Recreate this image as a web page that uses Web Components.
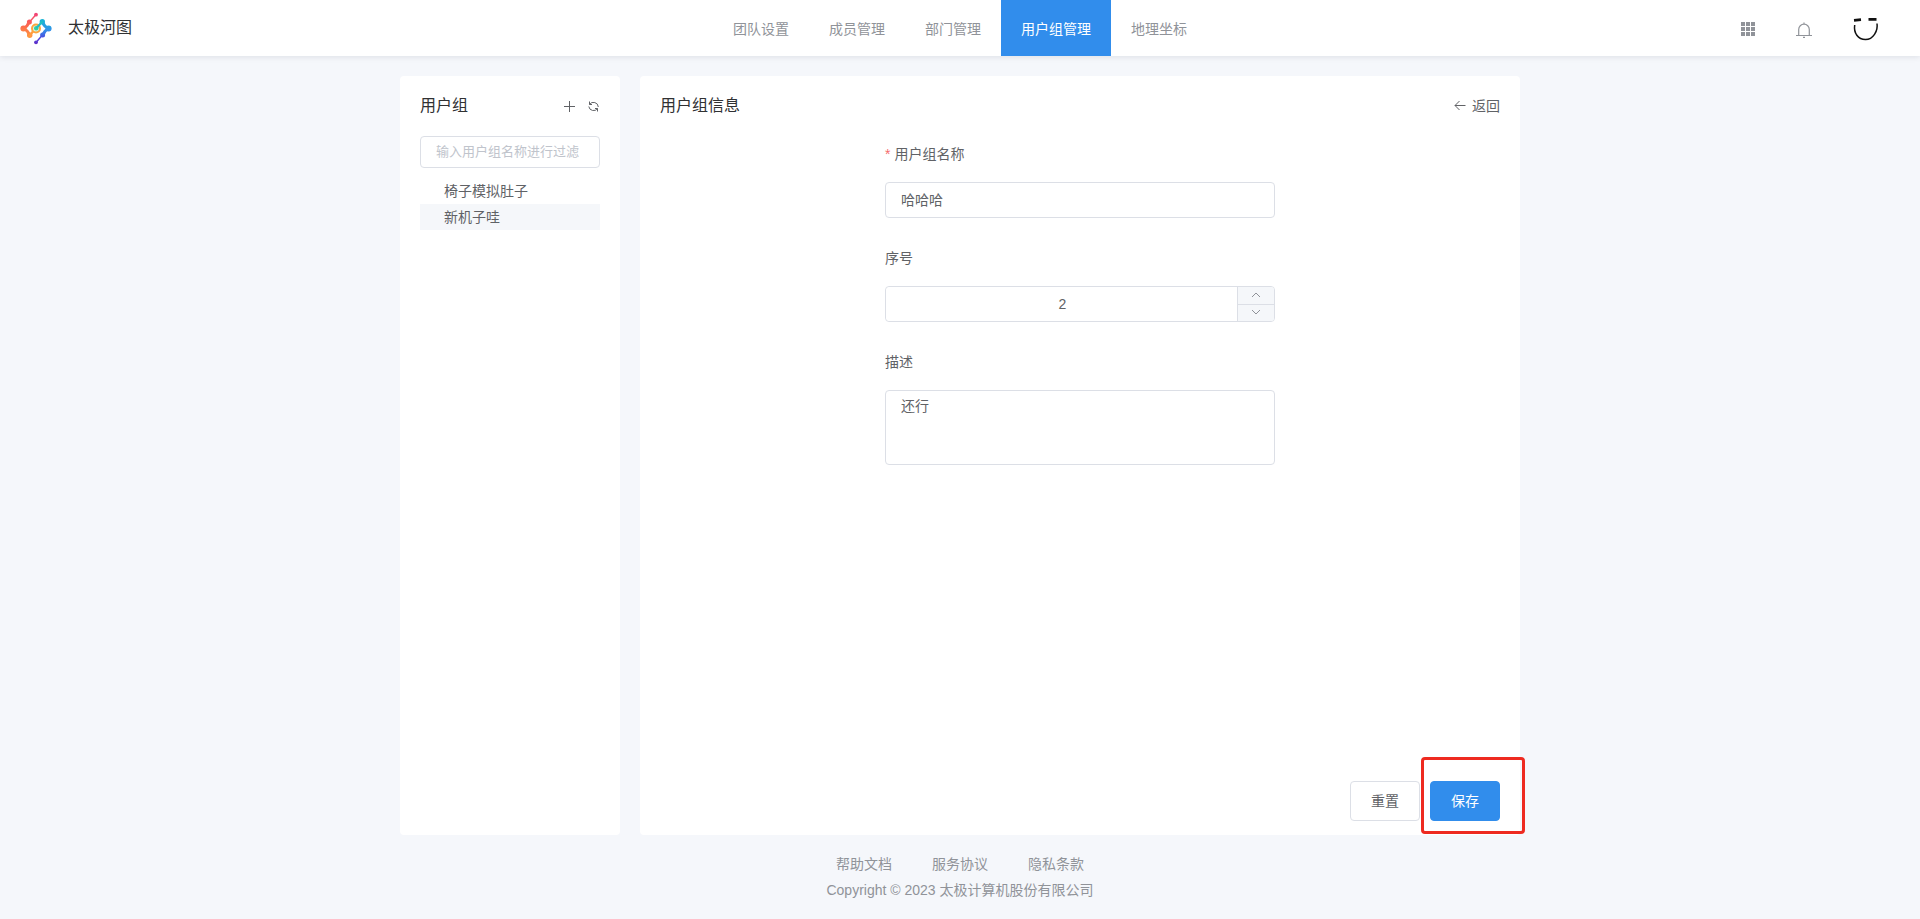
<!DOCTYPE html>
<html lang="zh-CN">
<head>
<meta charset="utf-8">
<title>用户组管理</title>
<style>
  html, body { margin: 0; height: 100%; }
  body {
    font-family: "Liberation Sans", "Noto Sans CJK SC", sans-serif;
    font-size: 14px;
    color: #606266;
    --primary: #318dec;
    --page: #f5f7fb;
    --line: #dcdfe6;
    --title: #303133;
    --muted: #909399;
    background: var(--page);
  }
</style>
</head>
<body>
<admin-page>
  <top-bar slot="header">
    <nav-link href="#team">团队设置</nav-link>
    <nav-link href="#member">成员管理</nav-link>
    <nav-link href="#dept">部门管理</nav-link>
    <nav-link href="#group" active>用户组管理</nav-link>
    <nav-link href="#geo">地理坐标</nav-link>
  </top-bar>
  <side-card slot="side">
    <tree-item>椅子模拟肚子</tree-item>
    <tree-item current>新机子哇</tree-item>
  </side-card>
  <detail-card>
    <text-field label="用户组名称" value="哈哈哈" required></text-field>
    <number-field label="序号" value="2"></number-field>
    <area-field label="描述" value="还行"></area-field>
    <action-button slot="actions">重置</action-button>
    <action-button slot="actions" primary marked>保存</action-button>
  </detail-card>
  <page-footer slot="footer"></page-footer>
</admin-page>

<script>
const base = `
  *, *::before, *::after { box-sizing: border-box; }
  button, input, textarea { font: inherit; color: inherit; margin: 0; outline: none; }
  a { color: inherit; text-decoration: none; }
  svg { display: block; }
  .icon { border: 0; background: none; padding: 0; cursor: pointer; display: flex; }
`;

function define(name, template) {
  customElements.define(name, class extends HTMLElement {
    constructor() {
      super();
      const root = this.attachShadow({ mode: 'open' });
      const [css, html] = template(this);
      root.innerHTML = `<style>${base}${css}</style>${html}`;
    }
  });
}

define('admin-page', () => [`
  :host { display: flex; flex-direction: column; min-height: 100vh; }
  main { flex: 1; display: grid; grid-template-columns: 220px minmax(0, 1fr); gap: 20px;
    width: 100%; max-width: 1120px; margin: 0 auto; padding-top: 20px; }
`, `
  <slot name="header"></slot>
  <main><slot name="side"></slot><slot></slot></main>
  <slot name="footer"></slot>
`]);

define('top-bar', () => [`
  :host { display: grid; grid-template-columns: 1fr auto 1fr; align-items: center; height: 56px;
    padding: 0 40px 0 20px; background: #fff; box-shadow: 0 1px 6px rgba(0, 21, 41, .1); }
  .brand { display: flex; align-items: center; gap: 16px; font-size: 16px; line-height: 24px; color: var(--title); }
  nav { display: flex; margin-left: 20px; }
  .tools { display: flex; align-items: center; justify-content: flex-end; gap: 40px; padding-top: 2px; color: var(--muted); }
`, `
  <a class="brand" href="#home">
    <svg width="32" height="34" viewBox="1 0 32 34" aria-hidden="true" fill="none" stroke-linecap="round" stroke-linejoin="round">
      <defs>
        <linearGradient id="warm" gradientUnits="userSpaceOnUse" x1="14" y1="1" x2="12" y2="27"><stop offset="0" stop-color="#f0407c"/><stop offset=".5" stop-color="#fb6450"/><stop offset="1" stop-color="#ff9c3f"/></linearGradient>
        <linearGradient id="cool" gradientUnits="userSpaceOnUse" x1="22" y1="7" x2="20" y2="33"><stop offset="0" stop-color="#14b9d2"/><stop offset=".45" stop-color="#3390ea"/><stop offset=".8" stop-color="#5040dc"/><stop offset="1" stop-color="#5f2fc8"/></linearGradient>
      </defs>
      <g stroke="url(#cool)">
        <path stroke-width="1.400" d="M17 31.500l6-7"/>
        <path stroke-width="3" d="M24 24q1-4 5.500-6.500-4.500-2-6-6.500"/>
      </g>
      <g fill="url(#cool)"><circle cx="17" cy="31.300" r="1.900"/><circle cx="23.600" cy="24" r="2.500"/><circle cx="29.600" cy="17.500" r="3"/><circle cx="23.300" cy="10.800" r="2.700"/></g>
      <g stroke="url(#warm)">
        <path stroke-width="1.400" d="M17 3.500l-6 7"/>
        <path stroke-width="3" d="M10 11q-1 4-5.500 6.500 4.500 2 6 6.500"/>
      </g>
      <g fill="url(#warm)"><circle cx="17" cy="3.700" r="1.900"/><circle cx="10.400" cy="11" r="2.500"/><circle cx="4.400" cy="17.500" r="3"/><circle cx="10.700" cy="24.200" r="2.700"/></g>
      <path stroke="#ff9c3f" stroke-width="2.400" d="M11 24l3-3.500"/>
      <circle cx="17" cy="17.500" r="4" fill="#d9f4e4" stroke="#fba63f" stroke-width="2"/>
      <circle cx="17.200" cy="17.300" r="2.200" fill="#35cfa0"/>
      <path stroke="#1fbfc4" stroke-width="2.200" d="M18 16.500l5-5.500"/>
    </svg>
    <span>太极河图</span>
  </a>
  <nav><slot></slot></nav>
  <div class="tools">
    <button class="icon" aria-label="应用">
      <svg width="14" height="14" viewBox="0 0 14 14" fill="currentColor"><path d="M0 0h4v4H0zM5 0h4v4H5zM10 0h4v4h-4zM0 5h4v4H0zM5 5h4v4H5zM10 5h4v4h-4zM0 10h4v4H0zM5 10h4v4H5zM10 10h4v4h-4z"/></svg>
    </button>
    <button class="icon" aria-label="通知">
      <svg width="18" height="18" viewBox="0 -2 18 18" fill="none" stroke="currentColor" stroke-width="1.200"><path d="M1 13.500h16M3.700 13.500V7.500a5.300 5.300 0 0 1 10.600 0v6M9 2V.5M8 15.400h2"/></svg>
    </button>
    <button class="icon" aria-label="个人中心">
      <svg width="27" height="24" viewBox="1 -1 27 24" fill="none" stroke="#111"><path stroke-width="1.500" d="M2.700 7C1.500 15 6 21.500 13.500 21.500S26.200 13 25 5.500"/><path stroke-width="2.800" d="M2 2.300l7-.6M16.500 1.300h8"/></svg>
    </button>
  </div>
`]);

define('nav-link', el => [`
  :host { display: block; color: var(--muted); }
  :host([active]) { background: var(--primary); color: #fff; }
  a { display: block; height: 56px; padding: 0 20px; line-height: 58px; white-space: nowrap; }
`, `<a href="${el.getAttribute('href')}"><slot></slot></a>`]);

define('side-card', () => [`
  :host { display: block; padding: 0 20px 20px; background: #fff; border-radius: 4px; }
  header { display: flex; align-items: center; height: 60px; gap: 12px; }
  h2 { flex: 1; margin: 0; font-size: 16px; font-weight: 400; line-height: 24px; color: var(--title); }
  input { display: block; width: 100%; height: 32px; padding: 0 15px 2px; border: 1px solid var(--line);
    border-radius: 4px; font-size: 13px; background: #fff; }
  input::placeholder { color: #c0c4cc; }
  .tree { margin-top: 10px; }
`, `
  <header>
    <h2>用户组</h2>
    <button class="icon" aria-label="新增"><svg width="12" height="14" viewBox="0 0 12 14" fill="none" stroke="currentColor"><path d="M0 7.500h11M5.500 2v11"/></svg></button>
    <button class="icon" aria-label="刷新"><svg width="12" height="14" viewBox="0 0 12 14" fill="none" stroke="currentColor"><path d="M1.500 2.500v3H4M1.500 5.500A4.800 4.800 0 0 1 10.300 8M9.500 12.500v-3H7M9.500 9.500A4.800 4.800 0 0 1 .8 7.500"/></svg></button>
  </header>
  <input type="text" aria-label="过滤" placeholder="输入用户组名称进行过滤">
  <div class="tree"><slot></slot></div>
`]);

define('tree-item', () => [`
  :host { display: block; padding-left: 24px; line-height: 26px; cursor: pointer; }
  :host([current]) { background: #f5f7fa; }
`, `<slot></slot>`]);

define('detail-card', () => [`
  :host { display: flex; flex-direction: column; padding: 0 20px 14px; background: #fff; border-radius: 4px; }
  header { display: flex; align-items: center; justify-content: space-between; height: 58px; padding-top: 2px; }
  h2 { margin: 0; font-size: 16px; font-weight: 400; line-height: 24px; color: var(--title); }
  .back { display: flex; align-items: center; gap: 6px; line-height: 24px; }
  form { flex: 1; width: 100%; max-width: 390px; margin: 0 auto; display: flex; flex-direction: column; gap: 20px; }
  footer { display: flex; justify-content: flex-end; gap: 10px; }
`, `
  <header>
    <h2>用户组信息</h2>
    <a class="back" href="#back"><svg width="12" height="12" viewBox="0 0 12 12" fill="none" stroke="currentColor"><path d="M11.500 5.500H1M5.500 1L1 5.500 5.500 10"/></svg><span>返回</span></a>
  </header>
  <form><slot></slot></form>
  <footer><slot name="actions"></slot></footer>
`]);

const fieldCss = `
  :host { display: flex; flex-direction: column; gap: 8px; }
  label { line-height: 40px; }
  label.required::before { content: "*"; color: #f56c6c; margin-right: 4px; }
  input, textarea { display: block; width: 100%; background: #fff; border: 1px solid var(--line); border-radius: 4px; padding: 0 15px 2px; }
  input { height: 36px; }
`;
const labelFor = el =>
  `<label for="control"${el.hasAttribute('required') ? ' class="required"' : ''}>${el.getAttribute('label')}</label>`;

define('text-field', el => [fieldCss,
  `${labelFor(el)}<input id="control" type="text" value="${el.getAttribute('value')}">`]);

define('area-field', el => [`${fieldCss}
  textarea { height: 75px; padding: 5px 15px; line-height: 21px; resize: none; }
`, `${labelFor(el)}<textarea id="control">${el.getAttribute('value')}</textarea>`]);

define('number-field', el => [`${fieldCss}
  .box { display: flex; height: 36px; border: 1px solid var(--line); border-radius: 4px; overflow: hidden; }
  input { flex: 1; min-width: 0; height: 34px; border: 0; padding: 0 14px 0 16px; text-align: center; appearance: textfield; }
  input::-webkit-inner-spin-button { appearance: none; margin: 0; }
  .steps { display: grid; grid-template-rows: 1fr 1fr; width: 37px; border-left: 1px solid var(--line);
    background: #f5f7fa; color: var(--muted); }
  .icon { align-items: center; justify-content: center; padding-bottom: 1px; }
  .icon + .icon { border-top: 1px solid var(--line); padding-bottom: 2px; }
`, `${labelFor(el)}
  <div class="box">
    <input id="control" type="number" value="${el.getAttribute('value')}">
    <div class="steps">
      <button type="button" class="icon" aria-label="增加"><svg width="10" height="6" viewBox="0 0 10 6" fill="none" stroke="currentColor"><path d="M1 5l4-4 4 4"/></svg></button>
      <button type="button" class="icon" aria-label="减少"><svg width="10" height="6" viewBox="0 0 10 6" fill="none" stroke="currentColor"><path d="M1 1l4 4 4-4"/></svg></button>
    </div>
  </div>`]);

define('action-button', () => [`
  :host { display: block; position: relative; }
  button { display: block; width: 70px; height: 40px; padding: 0 0 2px; border: 1px solid var(--line); border-radius: 4px;
    background: #fff; cursor: pointer; }
  :host([primary]) button { background: var(--primary); border-color: var(--primary); color: #fff; }
  :host([marked])::after { content: ""; position: absolute; inset: -24px -25px -13px -9px;
    border: 3px solid #ee2a20; border-radius: 4px; pointer-events: none; }
`, `<button type="button"><slot></slot></button>`]);

define('page-footer', () => [`
  :host { display: flex; flex-direction: column; align-items: center; padding: 16px 0; line-height: 26px; color: var(--muted); }
  nav { display: flex; gap: 40px; }
`, `
  <nav><a href="#help">帮助文档</a><a href="#terms">服务协议</a><a href="#privacy">隐私条款</a></nav>
  <div>Copyright © 2023 太极计算机股份有限公司</div>
`]);
</script>
</body>
</html>
